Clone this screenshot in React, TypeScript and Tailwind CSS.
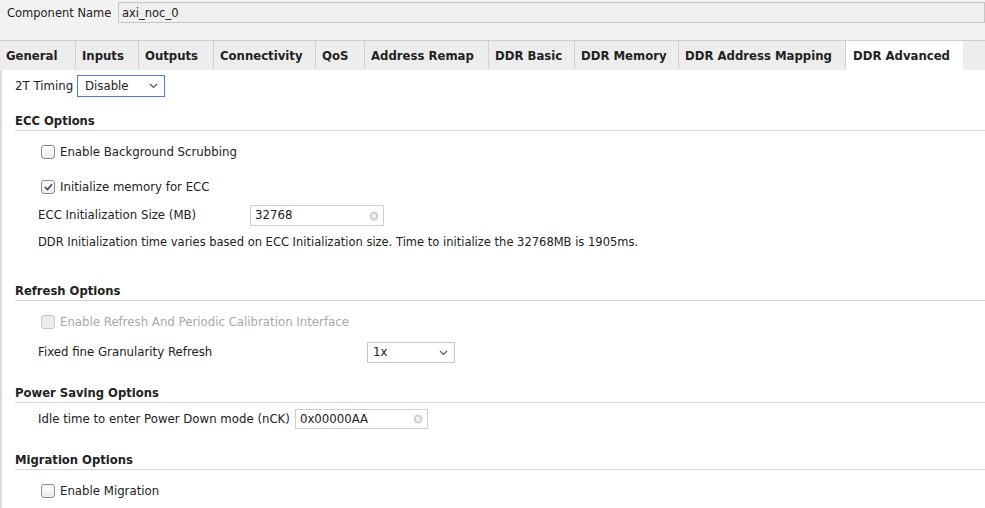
import React from 'react';

const tabs = [
  { label: 'General', w: 'w-[76px]' },
  { label: 'Inputs', w: 'w-[63px]' },
  { label: 'Outputs', w: 'w-[75px]' },
  { label: 'Connectivity', w: 'w-[102px]' },
  { label: 'QoS', w: 'w-[49px]' },
  { label: 'Address Remap', w: 'w-[124px]' },
  { label: 'DDR Basic', w: 'w-[86px]' },
  { label: 'DDR Memory', w: 'w-[104px]' },
  { label: 'DDR Address Mapping', w: 'w-[167px]' },
];

function Chevron() {
  return (
    <svg width="9" height="6" viewBox="0 0 9 6" className="shrink-0">
      <path d="M1 1 L4.5 4.5 L8 1" fill="none" stroke="#555" strokeWidth="1.2" />
    </svg>
  );
}

function ClearIcon() {
  return (
    <svg width="10" height="10" viewBox="0 0 10 10" className="shrink-0">
      <circle cx="5" cy="5" r="4.5" fill="#d2d2d2" />
      <path d="M3.2 3.2 L6.8 6.8 M6.8 3.2 L3.2 6.8" stroke="#fff" strokeWidth="1.3" />
    </svg>
  );
}

function CheckBox({ checked, disabled }: { checked?: boolean; disabled?: boolean }) {
  return (
    <span
      className={`w-[14px] h-[14px] rounded-[3px] border flex items-center justify-center shrink-0 ${
        disabled ? 'border-[#c8c8c8] bg-[#ececec]' : 'border-[#8c8c8c] bg-gradient-to-b from-white to-[#ececec]'
      }`}>
      {checked && (
        <svg width="9" height="8" viewBox="0 0 9 8">
          <path d="M1 4 L3.5 6.5 L8 1.2" fill="none" stroke="#444" strokeWidth="1.6" />
        </svg>
      )}
    </span>
  );
}

function CheckRow({ label, checked, disabled, mt }: { label: string; checked?: boolean; disabled?: boolean; mt: string }) {
  return (
    <div className={`${mt} h-[16px] pl-[26px] flex items-center gap-[5px] ${disabled ? 'text-[#a8a8a8]' : ''}`}>
      <CheckBox checked={checked} disabled={disabled} />
      <span className="pt-[1px]">{label}</span>
    </div>
  );
}

function Header({ label, mt }: { label: string; mt: string }) {
  return (
    <div className={`${mt} h-[18px] border-b border-[#d4d4d4] flex items-center font-bold text-[11.6px]`}>{label}</div>
  );
}

export default function App() {
  return (
    <div className="w-[985px] h-[508px] overflow-hidden bg-white text-[11.75px] text-[#222] font-['DejaVu_Sans',sans-serif]">
      <div className="h-[41px] bg-[#f2f2f2] border-b border-[#cfcfcf] flex items-start pt-[2px] text-[11.5px]">
        <span className="w-[118px] h-[21px] flex items-center pl-[7px] pt-[2px]">Component Name</span>
        <div className="flex-1 h-[21px] border border-[#c6c6c6] bg-[#efefef] flex items-center px-[3px] pt-[2px]">axi_noc_0</div>
      </div>
      <div className="h-[29px] bg-[#ededed] flex font-bold text-[11.7px]">
        {tabs.map((t) => (
          <div key={t.label} className={`${t.w} h-full pl-[6px] pt-[2px] flex items-center border-r border-[#d2d2d2]`}>
            {t.label}
          </div>
        ))}
        <div className="w-[117px] h-full pl-[7px] pt-[2px] flex items-center bg-white">DDR Advanced</div>
      </div>
      <div className="h-[438px] border-l-2 border-[#dcdcdc] pl-[13px] flex flex-col">
        <div className="mt-[5px] h-[22px] flex items-center">
          <span className="w-[62px] pt-[2px]">2T Timing</span>
          <div className="w-[88px] h-[22px] border border-[#4a7fd2] flex items-center justify-between pl-[7px] pr-[6px]">
            <span className="pt-[2px]">Disable</span>
            <Chevron />
          </div>
        </div>

        <Header label="ECC Options" mt="mt-[16px]" />
        <CheckRow label="Enable Background Scrubbing" mt="mt-[13px]" />
        <CheckRow label="Initialize memory for ECC" checked mt="mt-[19px]" />
        <div className="mt-[10px] h-[21px] pl-[23px] flex items-center">
          <span className="w-[212px]">ECC Initialization Size (MB)</span>
          <div className="w-[134px] h-[21px] border border-[#cfcfcf] flex items-center justify-between pl-[4px] pr-[4px]">
            <span>32768</span>
            <ClearIcon />
          </div>
        </div>
        <div className="mt-[8px] h-[16px] pl-[23px] pt-[1px] flex items-center text-[11.5px]">
          DDR Initialization time varies based on ECC Initialization size. Time to initialize the 32768MB is 1905ms.
        </div>

        <Header label="Refresh Options" mt="mt-[33px]" />
        <CheckRow label="Enable Refresh And Periodic Calibration Interface" disabled mt="mt-[13px]" />
        <div className="mt-[12px] h-[21px] pl-[23px] flex items-center">
          <span className="w-[329px]">Fixed fine Granularity Refresh</span>
          <div className="w-[88px] h-[21px] border border-[#c8c8c8] flex items-center justify-between pl-[5px] pr-[6px]">
            <span>1x</span>
            <Chevron />
          </div>
        </div>

        <Header label="Power Saving Options" mt="mt-[22px]" />
        <div className="mt-[6px] h-[20px] pl-[23px] flex items-center">
          <span className="mr-[5px] pt-[1px]">Idle time to enter Power Down mode (nCK)</span>
          <div className="w-[133px] h-[20px] border border-[#cfcfcf] flex items-center justify-between pl-[4px] pr-[4px]">
            <span className="pt-[1px]">0x00000AA</span>
            <ClearIcon />
          </div>
        </div>

        <Header label="Migration Options" mt="mt-[23px]" />
        <CheckRow label="Enable Migration" mt="mt-[13px]" />
      </div>
    </div>
  );
}
